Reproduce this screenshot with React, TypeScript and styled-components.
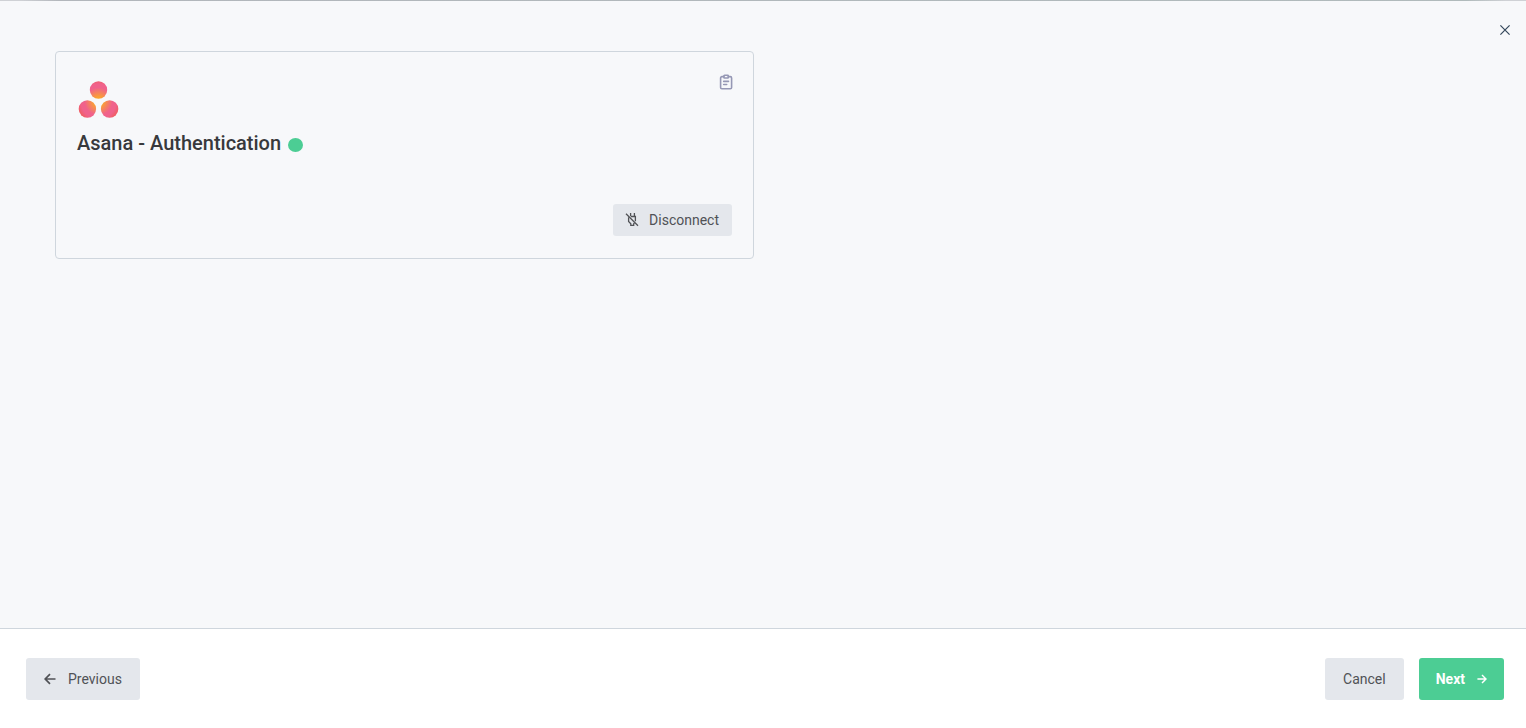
import React from "react";
import styled, { createGlobalStyle } from "styled-components";

const GlobalStyle = createGlobalStyle`
  *, *::before, *::after { box-sizing: border-box; }
  body {
    margin: 0;
    background: #f7f8fa;
    color: #38393c;
    font-family: Roboto, "Liberation Sans", sans-serif;
  }
`;

const Page = styled.div`
  display: flex;
  flex-direction: column;
  min-height: 100vh;
`;

const TopEdge = styled.div`
  height: 1px;
  background: linear-gradient(90deg, #cfd1d5 20px, #b2b6bb 60px, #b0babb calc(100% - 60px), #cfd1d5 calc(100% - 20px));
`;

const TopBar = styled.header`
  display: flex;
  justify-content: flex-end;
  padding: 19px 11px 1px;
`;

const IconButton = styled.button`
  display: flex;
  align-items: center;
  justify-content: center;
  width: 20px;
  height: 20px;
  padding: 0;
  border: 0;
  background: none;
  color: ${({ color }) => color};
  cursor: pointer;
`;

const Main = styled.main`
  flex: 1;
  display: grid;
  grid-template-columns: repeat(2, minmax(0, 1fr));
  align-items: start;
  gap: 18px;
  padding: 10px 55px 24px;
`;

const Card = styled.section`
  display: flex;
  flex-direction: column;
  min-height: 208px;
  padding: 20px 21px 22px;
  border: 1px solid #cfd6dd;
  border-radius: 4px;
`;

const CardHeader = styled.div`
  display: flex;
  justify-content: space-between;
  align-items: flex-start;
  margin-right: -4px;
`;

const LogoBox = styled.div`
  height: 46px;
  svg { display: block; overflow: visible; }
`;

const Title = styled.h1`
  display: flex;
  align-items: center;
  gap: 7px;
  margin: 11px 0 0;
  font-size: 20px;
  line-height: 28px;
  font-weight: 500;
`;

const StatusDot = styled.span`
  width: 15px;
  height: 14px;
  margin-top: 4px;
  border-radius: 50%;
  background: #4ccd94;
`;

const CardActions = styled.div`
  display: flex;
  justify-content: flex-end;
  margin-top: auto;
`;

const Footer = styled.footer`
  display: flex;
  align-items: center;
  gap: 15px;
  min-height: 100px;
  padding: 0 22px 0 26px;
  border-top: 1px solid #cfd6dd;
  background: #fff;
`;

const Button = styled.button<{ $primary?: boolean; $small?: boolean; $start?: boolean }>`
  display: flex;
  align-items: center;
  gap: ${({ $small }) => ($small ? 10 : 12)}px;
  height: ${({ $small }) => ($small ? 32 : 42)}px;
  margin-right: ${({ $start }) => ($start ? "auto" : "0")};
  padding: ${({ $small, $primary }) => ($small ? "0 13px 0 12px" : $primary ? "0 17px" : "0 18px")};
  border: 0;
  border-radius: 3px;
  background: ${({ $primary }) => ($primary ? "#4ccd94" : "#e4e7ec")};
  color: ${({ $primary }) => ($primary ? "#fff" : "#505256")};
  font-family: inherit;
  font-size: 14px;
  line-height: 20px;
  font-weight: ${({ $primary }) => ($primary ? 700 : 400)};
  cursor: pointer;
`;

const AsanaLogo = () => (
  <svg width="42" height="42" viewBox="0 0 42 42" aria-label="Asana" role="img">
    <defs>
      <radialGradient id="asana" gradientUnits="userSpaceOnUse" cx="21.5" cy="29.5" r="23">
        <stop offset="0" stopColor="#fcae28" />
        <stop offset="0.2" stopColor="#faa133" />
        <stop offset="0.6" stopColor="#f0628b" />
        <stop offset="0.76" stopColor="#f0628b" />
        <stop offset="1" stopColor="#f05b57" />
      </radialGradient>
    </defs>
    <g fill="url(#asana)">
      <circle cx="21.5" cy="18" r="8.7" />
      <circle cx="10.4" cy="37" r="8.7" />
      <circle cx="32.6" cy="37" r="8.7" />
    </g>
  </svg>
);

const CloseIcon = () => (
  <svg width="10" height="10" viewBox="0 0 10 10" fill="none" stroke="currentColor" strokeWidth="1.2">
    <path d="M.4.4l9.2 9.2M9.6.4L.4 9.6" />
  </svg>
);

const ClipboardIcon = () => (
  <svg width="16" height="16" viewBox="0 0 16 16" fill="none" stroke="currentColor" strokeWidth="1.6" strokeLinecap="round" strokeLinejoin="round">
    <path d="M5.8 2.6H3.9a1.3 1.3 0 0 0-1.3 1.3v9.500a1.300 1.300 0 0 0 1.300 1.300h8.400a1.300 1.300 0 0 0 1.300-1.300V3.900a1.300 1.300 0 0 0-1.300-1.300h-1.900" />
    <path d="M6.500 1.300h3.200a.6.6 0 0 1 .6.6v1.500a.6.6 0 0 1-.6.6H6.500a.6.6 0 0 1-.6-.6V1.900a.6.6 0 0 1 .6-.6zM5.700 7.400h4.800M5.700 10.500h3" />
  </svg>
);

const UnplugIcon = () => (
  <svg width="14" height="14" viewBox="0 0 14 14" fill="none" stroke="currentColor" strokeWidth="1.3">
    <path d="M1 .8l12 12" />
    <path d="M5.600 0v3.200M9.400 0v3.800M5.900 3.500h4.500v4.800M3.600 4.300v4.200l2.200 2.200v1.700h2.900v-1.700l.8-.8" />
  </svg>
);

const ArrowIcon = ({ left, size }: { left?: boolean; size: number }) => (
  <svg width={size} height={size} viewBox="0 0 12 12" fill="none" stroke="currentColor" strokeWidth="1.7">
    <path d={left ? "M11.500 6H1.500M6 1.200L1.200 6L6 10.800" : "M.5 6h10M6 1.200L10.800 6L6 10.800"} />
  </svg>
);

export default function App() {
  return (
    <Page>
      <GlobalStyle />
      <TopEdge />
      <TopBar>
        <IconButton color="#34475b" aria-label="Close">
          <CloseIcon />
        </IconButton>
      </TopBar>
      <Main>
        <Card>
          <CardHeader>
            <LogoBox>
              <AsanaLogo />
            </LogoBox>
            <IconButton color="#9698b5" aria-label="Copy details">
              <ClipboardIcon />
            </IconButton>
          </CardHeader>
          <Title>
            Asana - Authentication
            <StatusDot role="img" aria-label="Connected" />
          </Title>
          <CardActions>
            <Button $small>
              <UnplugIcon />
              Disconnect
            </Button>
          </CardActions>
        </Card>
      </Main>
      <Footer>
        <Button $start>
          <ArrowIcon left size={12} />
          Previous
        </Button>
        <Button>Cancel</Button>
        <Button $primary>
          Next
          <ArrowIcon size={10} />
        </Button>
      </Footer>
    </Page>
  );
}
